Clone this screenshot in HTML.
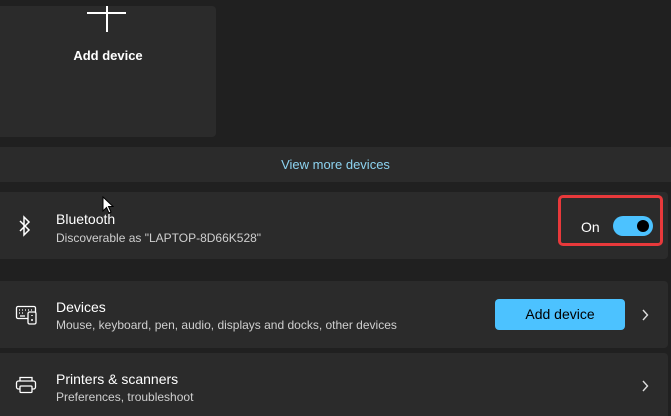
<!DOCTYPE html><html><head><style>
html,body{margin:0;width:671px;height:416px;overflow:hidden}
body{background:#202020;font-family:"Liberation Sans",sans-serif;color:#fff;position:relative}
.a{position:absolute}
.card{position:absolute;background:#2b2b2b;border-radius:4px}
.t{font-size:14px;color:#fff}
.s{font-size:12px;color:#cfcfcf}
</style></head><body>
<div class="card" style="left:-4px;top:6px;width:220px;height:131px"></div>
<div class="a" style="left:87px;top:12px;width:39px;height:2px;background:#fff"></div>
<div class="a" style="left:106px;top:6px;width:2px;height:26px;background:#fff"></div>
<div class="a" style="left:0;width:216px;top:48px;text-align:center;font-size:13px;font-weight:bold">Add device</div>
<div class="card" style="left:-4px;top:147px;width:679px;height:35px;border-radius:0"></div>
<div class="a" style="left:0;width:671px;top:157px;text-align:center;font-size:13px;color:#8dd3f0">View more devices</div>
<div class="card" style="left:-4px;top:192px;width:672px;height:67px"></div>
<svg class="a" style="left:18px;top:215px" width="14" height="22" viewBox="0 0 14 22"><path d="M2 6 L11 15 L6 20 L6 2 L11 7 L2 16" fill="none" stroke="#fff" stroke-width="1.5"/></svg>
<div class="a t" style="left:56px;top:211px">Bluetooth</div>
<div class="a s" style="left:56px;top:231px">Discoverable as "LAPTOP-8D66K528"</div>
<div class="a" style="left:558px;top:195px;width:99px;height:45px;border:3px solid #e8393b;border-radius:5px"></div>
<div class="a t" style="left:581px;top:219px">On</div>
<div class="a" style="left:613px;top:216px;width:40px;height:20px;border-radius:10px;background:#4cc2ff"></div>
<div class="a" style="left:637px;top:220px;width:12px;height:12px;border-radius:6px;background:#000"></div>
<div class="card" style="left:-4px;top:281px;width:672px;height:67px"></div>
<svg class="a" style="left:15px;top:305px" width="24" height="20" viewBox="0 0 24 20"><rect x="1.5" y="1.5" width="19" height="12" rx="1.5" fill="none" stroke="#fff" stroke-width="1.3"/><rect x="13" y="7" width="8" height="12" rx="1.5" fill="#2b2b2b" stroke="#fff" stroke-width="1.3"/><path d="M4 5h1M7 5h1M10 5h1M13 5h1M16 5h1M4 8h1M7 8h1M5 11h5" stroke="#fff" stroke-width="1.2"/><path d="M17 10v1M17 14v2" stroke="#fff" stroke-width="1.5"/></svg>
<div class="a t" style="left:56px;top:299px">Devices</div>
<div class="a s" style="left:56px;top:318px">Mouse, keyboard, pen, audio, displays and docks, other devices</div>
<div class="a" style="left:495px;top:299px;width:130px;height:31px;border-radius:4px;background:#4cc2ff;color:#000;font-size:14px;text-align:center;line-height:31px">Add device</div>
<svg class="a" style="left:641px;top:309px" width="8" height="12" viewBox="0 0 8 12"><path d="M2 1l4.5 5L2 11" fill="none" stroke="#ddd" stroke-width="1.4"/></svg>
<div class="card" style="left:-4px;top:353px;width:672px;height:70px"></div>
<svg class="a" style="left:15px;top:376px" width="22" height="18" viewBox="0 0 22 18"><path d="M5 5V1.5h12V5" fill="none" stroke="#fff" stroke-width="1.3"/><rect x="1.5" y="5" width="19" height="8" rx="2" fill="none" stroke="#fff" stroke-width="1.3"/><rect x="5" y="10" width="12" height="6.5" rx="1" fill="#2b2b2b" stroke="#fff" stroke-width="1.3"/></svg>
<div class="a t" style="left:56px;top:371px">Printers &amp; scanners</div>
<div class="a s" style="left:56px;top:390px">Preferences, troubleshoot</div>
<svg class="a" style="left:641px;top:380px" width="8" height="12" viewBox="0 0 8 12"><path d="M2 1l4.5 5L2 11" fill="none" stroke="#ddd" stroke-width="1.4"/></svg>
<svg class="a" style="left:102px;top:196px" width="12" height="18" viewBox="0 0 12 18"><path d="M1 1V15L4.5 11.5L7 17L9 16L6.5 10.5H11Z" fill="#fff" stroke="#000"/></svg>
</body></html>
